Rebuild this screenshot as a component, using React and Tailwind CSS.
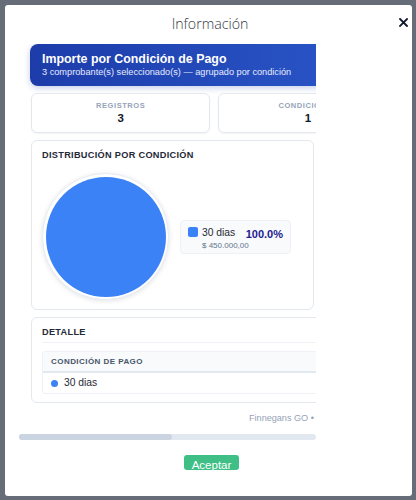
import React from "react";

const ROWS = [{ name: "30 dias", amount: "$ 450.000,00", pct: "100.0%", color: "#3b82f6" }];

function CloseIcon() {
  return (
    <svg width="9" height="9" viewBox="0 0 9 9" fill="none">
      <path d="M1 1L8 8M8 1L1 8" stroke="#0f172a" strokeWidth="1.8" strokeLinecap="square" />
    </svg>
  );
}

function StatCard({ label, value }) {
  return (
    <div className="flex-1 h-[40px] bg-white border border-[#e3e8ef] rounded-[6px] shadow-[0_1px_2px_rgba(15,23,42,0.05)] flex flex-col items-center justify-center gap-[3px]">
      <span className="text-[7.5px] font-bold tracking-[0.55px] text-[#94a3b8] leading-none">{label}</span>
      <span className="text-[11.5px] font-bold text-[#111827] leading-none">{value}</span>
    </div>
  );
}

export default function App() {
  return (
    <div className="w-[416px] h-[500px] bg-[#666d79] pt-[5px] pl-[5px] pr-[4px] pb-[4px] font-['Liberation_Sans',Arial,sans-serif] overflow-hidden">
      <div className="h-full bg-white rounded-[3px] flex flex-col relative">
        {/* header */}
        <div className="h-[39px] flex items-center justify-center shrink-0">
          <span className="font-['Open_Sans',sans-serif] font-light text-[14.2px] text-[#34383f] leading-none ml-[3px]">Información</span>
        </div>
        <button className="absolute right-[4px] top-[13px] w-[9px] h-[9px] flex items-center justify-center">
          <CloseIcon />
        </button>

        {/* scrolling body */}
        <div className="ml-[14px] w-[297px] overflow-hidden shrink-0">
          <div className="w-[578px] px-[12px]">
            <div className="-ml-px h-[42px] rounded-[8px] bg-gradient-to-r from-[#1d3caa] to-[#3468dc] shadow-[0_2px_6px_rgba(30,64,175,0.25)] pl-[12px] flex flex-col justify-center gap-[3px]">
              <span className="text-[12.4px] font-bold text-white leading-none">Importe por Condición de Pago</span>
              <span className="text-[9.2px] text-[#e6ecff] leading-none">3 comprobante(s) seleccionado(s) — agrupado por condición</span>
            </div>

            <div className="mt-[7px] flex gap-[8px]">
              <StatCard label="REGISTROS" value="3" />
              <StatCard label="CONDICIONES" value="1" />
              <StatCard label="IMPORTE TOTAL" value="$ 450.000,00" />
            </div>

            <div className="mt-[7px] flex gap-[8px]">
              <div className="flex-1 h-[170px] bg-white border border-[#e3e8ef] rounded-[6px] px-[10px] pt-[9px] pb-[9px] flex flex-col">
                <div className="text-[9.2px] font-bold tracking-[0.3px] text-[#1f2937] leading-none h-[9px] mt-[1px]">DISTRIBUCIÓN POR CONDICIÓN</div>
                <div className="mt-[6px] h-[1px] bg-[#eef2f7]" />
                <div className="mt-[7px] flex items-center gap-[11px]">
                  <div className="w-[127px] h-[127px] rounded-full bg-white border border-[#e8edf5] shadow-[0_1px_5px_rgba(15,23,42,0.12)] flex items-center justify-center shrink-0">
                    <div className="w-[120px] h-[120px] rounded-full bg-[#3b82f6]" />
                  </div>
                  <div className="flex flex-col gap-[4px]">
                    {ROWS.map((r) => (
                      <div key={r.name} className="w-[111px] h-[34px] bg-[#f8fafc] border border-[#eef2f7] rounded-[4px] pl-[7px] pr-[7px] pt-[5px] flex">
                        <span className="w-[10px] h-[10px] rounded-[2px] mt-[1px] shrink-0" style={{ backgroundColor: r.color }} />
                        <div className="ml-[4px] flex-1 flex flex-col">
                          <div className="flex items-center justify-between">
                            <span className="text-[10.3px] text-[#1f2937] leading-[12px]">{r.name}</span>
                            <span className="text-[11px] font-bold text-[#1e1b8f] leading-[12px] mt-[2px]">{r.pct}</span>
                          </div>
                          <span className="text-[8px] text-[#64748b] leading-none mt-[2px]">{r.amount}</span>
                        </div>
                      </div>
                    ))}
                  </div>
                </div>
              </div>
              <div className="flex-1 h-[170px] bg-white border border-[#e3e8ef] rounded-[6px]" />
            </div>

            <div className="mt-[7px] h-[86px] bg-white border border-[#e3e8ef] rounded-[6px] px-[10px] pt-[10px]">
              <div className="text-[9.2px] font-bold tracking-[0.3px] text-[#1f2937] leading-none h-[9px]">DETALLE</div>
              <div className="mt-[5px] h-[1px] bg-[#eef2f7]" />
              <div className="mt-[8px] border border-[#eef2f7] rounded-[3px] overflow-hidden">
                <div className="h-[21px] bg-[#f8fafc] border-b-2 border-[#e2e8f0] pl-[8px] flex items-center">
                  <span className="text-[8px] font-bold tracking-[0.45px] text-[#475569] leading-none">CONDICIÓN DE PAGO</span>
                </div>
                {ROWS.map((r) => (
                  <div key={r.name} className="h-[20px] pl-[8px] flex items-center gap-[6px]">
                    <span className="w-[7px] h-[7px] rounded-full" style={{ backgroundColor: r.color }} />
                    <span className="text-[10.3px] text-[#1f2937] leading-none">{r.name}</span>
                  </div>
                ))}
              </div>
            </div>

            <div className="mt-[9px] h-[14px] pl-[218px] flex items-center">
              <span className="text-[9.1px] text-[#94a3b8] leading-none whitespace-nowrap">Finnegans GO • Reporte de comprobantes</span>
            </div>
          </div>
          {/* horizontal scrollbar */}
          <div className="mt-[8px] h-[6px] rounded-full bg-[#e2e8f0]">
            <div className="w-[153px] h-full rounded-full bg-[#cbd5e1]" />
          </div>
        </div>

        <div className="mt-[15px] flex justify-center pl-[6px]">
          <button className="w-[55px] h-[15px] rounded-[3px] bg-[#3fbf86] overflow-hidden flex justify-center">
            <span className="text-[11.5px] text-white leading-none mt-[5px]">Aceptar</span>
          </button>
        </div>
      </div>
    </div>
  );
}
